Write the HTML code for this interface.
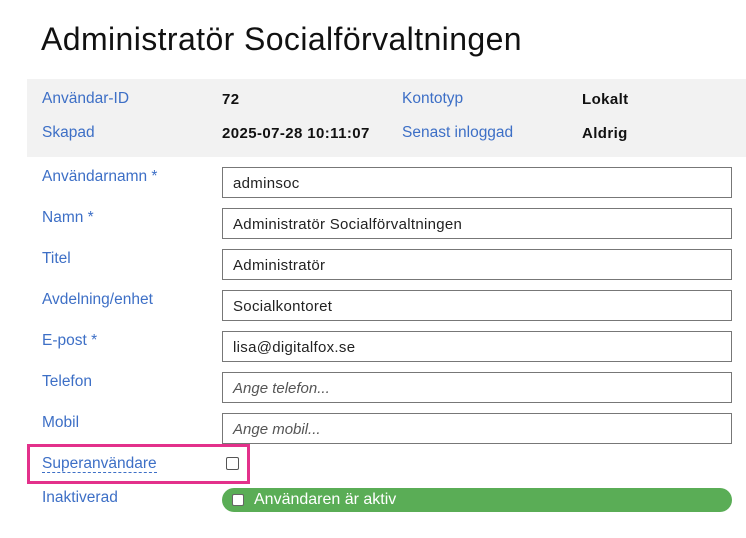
<!DOCTYPE html>
<html><head><meta charset="utf-8"><style>
*{box-sizing:border-box;margin:0;padding:0}
body{width:746px;height:538px;background:#fff;font-family:"Liberation Sans",sans-serif;position:relative;overflow:hidden}
.a{position:absolute}
h1{position:absolute;left:41px;top:21px;font-size:32px;font-weight:normal;color:#111;letter-spacing:0.4px}
.gray{position:absolute;left:27px;top:79px;width:719px;height:78px;background:#f2f2f2}
.l{position:absolute;color:#3d6fc6;font-size:15.5px}
.v{position:absolute;color:#111;font-size:15px;font-weight:bold;letter-spacing:0.4px}
.in{position:absolute;left:222px;width:510px;height:31px;border:1px solid #777;background:#fff;font-size:15px;color:#222;padding:7px 0 0 10px;letter-spacing:0.3px}
.ph{font-style:italic;color:#555;letter-spacing:0}
</style></head><body>
<h1>Administratör Socialförvaltningen</h1>
<div class="gray"></div>
<div class="l" style="left:42px;top:90px">Användar-ID</div>
<div class="v" style="left:222px;top:91px">72</div>
<div class="l" style="left:402px;top:90px">Kontotyp</div>
<div class="v" style="left:582px;top:91px">Lokalt</div>
<div class="l" style="left:42px;top:124px">Skapad</div>
<div class="v" style="left:222px;top:125px">2025-07-28 10:11:07</div>
<div class="l" style="left:402px;top:124px">Senast inloggad</div>
<div class="v" style="left:582px;top:125px">Aldrig</div>

<div class="l" style="left:42px;top:168px">Användarnamn *</div>
<div class="in" style="top:167px">adminsoc</div>
<div class="l" style="left:42px;top:209px">Namn *</div>
<div class="in" style="top:208px">Administratör Socialförvaltningen</div>
<div class="l" style="left:42px;top:250px">Titel</div>
<div class="in" style="top:249px">Administratör</div>
<div class="l" style="left:42px;top:291px">Avdelning/enhet</div>
<div class="in" style="top:290px">Socialkontoret</div>
<div class="l" style="left:42px;top:332px">E-post *</div>
<div class="in" style="top:331px">lisa@digitalfox.se</div>
<div class="l" style="left:42px;top:373px">Telefon</div>
<div class="in ph" style="top:372px">Ange telefon...</div>
<div class="l" style="left:42px;top:414px">Mobil</div>
<div class="in ph" style="top:413px">Ange mobil...</div>

<div class="a" style="left:27px;top:444px;width:223px;height:40px;border:3px solid #e3318b"></div>
<div class="l" style="left:42px;top:455px;border-bottom:1px dashed #3d6fc6;line-height:17px">Superanvändare</div>
<div class="a" style="left:226px;top:457px;width:13px;height:13px;border:1px solid #555;border-radius:2px;background:#fff"></div>
<div class="l" style="left:42px;top:489px">Inaktiverad</div>
<div class="a" style="left:222px;top:488px;width:510px;height:24px;background:#5aad56;border-radius:12px"></div>
<div class="a" style="left:232px;top:494px;width:12px;height:12px;border:1px solid #666;border-radius:2px;background:#fff"></div>
<div class="a" style="left:254px;top:491px;color:#fff;font-size:16px">Användaren är aktiv</div>
</body></html>
